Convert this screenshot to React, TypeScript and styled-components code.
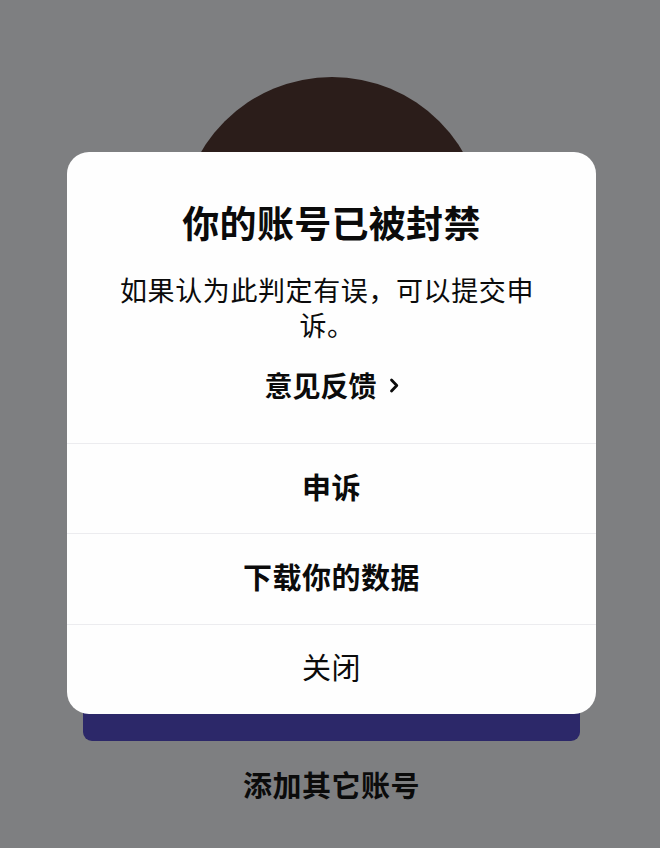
import styled, { createGlobalStyle } from 'styled-components';

const GlobalStyle = createGlobalStyle`
  html, body {
    margin: 0;
    padding: 0;
    background: #7e7f81;
  }
  body {
    font-family: "Noto Sans CJK SC", "Noto Sans", sans-serif;
    color: #0b0b0b;
  }
`;

// Account screen behind the dialog
const Screen = styled.div`
  position: relative;
  width: 660px;
  height: 848px;
  overflow: hidden;
  background: #7e7f81;
  display: flex;
  flex-direction: column;
  align-items: center;
  padding-left: 3px;
  box-sizing: border-box;
`;

const Avatar = styled.div`
  width: 304px;
  height: 304px;
  margin-top: 77px;
  border-radius: 50%;
  background: #2b1d1a;
  flex-shrink: 0;
`;

const PrimaryButton = styled.div`
  width: 497px;
  height: 52px;
  margin-top: 308px;
  border-radius: 9px;
  background: #2c2869;
  flex-shrink: 0;
`;

const SecondaryLink = styled.div`
  margin-top: 25px;
  font-size: 29px;
  line-height: 36px;
  font-weight: 700;
  color: #0b0b0b;
  letter-spacing: 0.5px;
`;

// Dialog
const Overlay = styled.div`
  position: absolute;
  inset: 0;
  padding: 152px 64px 0 67px;
  display: flex;
  align-items: flex-start;
`;

const Dialog = styled.div`
  width: 529px;
  background: #fefefe;
  border-radius: 22px;
  overflow: hidden;
  display: flex;
  flex-direction: column;
`;

const Header = styled.div`
  padding: 48px 48px 41px;
  display: flex;
  flex-direction: column;
  align-items: center;
  text-align: center;
`;

const Title = styled.h1`
  margin: 0;
  font-size: 37px;
  line-height: 44px;
  font-weight: 700;
  letter-spacing: 0.3px;
`;

const Message = styled.p`
  margin: 28px 0 0;
  padding-right: 9px;
  font-size: 27px;
  line-height: 35px;
  font-weight: 400;
  letter-spacing: 0.6px;
`;

const FeedbackLink = styled.div`
  margin-top: 26px;
  display: flex;
  align-items: center;
  gap: 12px;
  font-size: 28px;
  line-height: 34px;
  font-weight: 700;
`;

const Action = styled.div<{ $bold?: boolean }>`
  height: 90.4px;
  padding-bottom: 6px;
  box-sizing: border-box;
  display: flex;
  align-items: center;
  justify-content: center;
  border-top: 1px solid #ececef;
  font-size: 29px;
  font-weight: ${(p) => (p.$bold ? 700 : 400)};
  letter-spacing: 0.5px;
`;

const Chevron = () => (
  <svg width="10" height="15" viewBox="0 0 10 15">
    <path d="M2.5 2 L7.8 7.5 L2.5 13" fill="none" stroke="#0b0b0b" strokeWidth="2.8" strokeLinecap="round" strokeLinejoin="round" />
  </svg>
);

export default function App() {
  return (
    <>
      <GlobalStyle />
      <Screen>
        <Avatar />
        <PrimaryButton />
        <SecondaryLink>添加其它账号</SecondaryLink>
        <Overlay>
          <Dialog>
            <Header>
              <Title>你的账号已被封禁</Title>
              <Message>如果认为此判定有误，可以提交申诉。</Message>
              <FeedbackLink>
                意见反馈
                <Chevron />
              </FeedbackLink>
            </Header>
            <Action $bold>申诉</Action>
            <Action $bold>下载你的数据</Action>
            <Action>关闭</Action>
          </Dialog>
        </Overlay>
      </Screen>
    </>
  );
}
